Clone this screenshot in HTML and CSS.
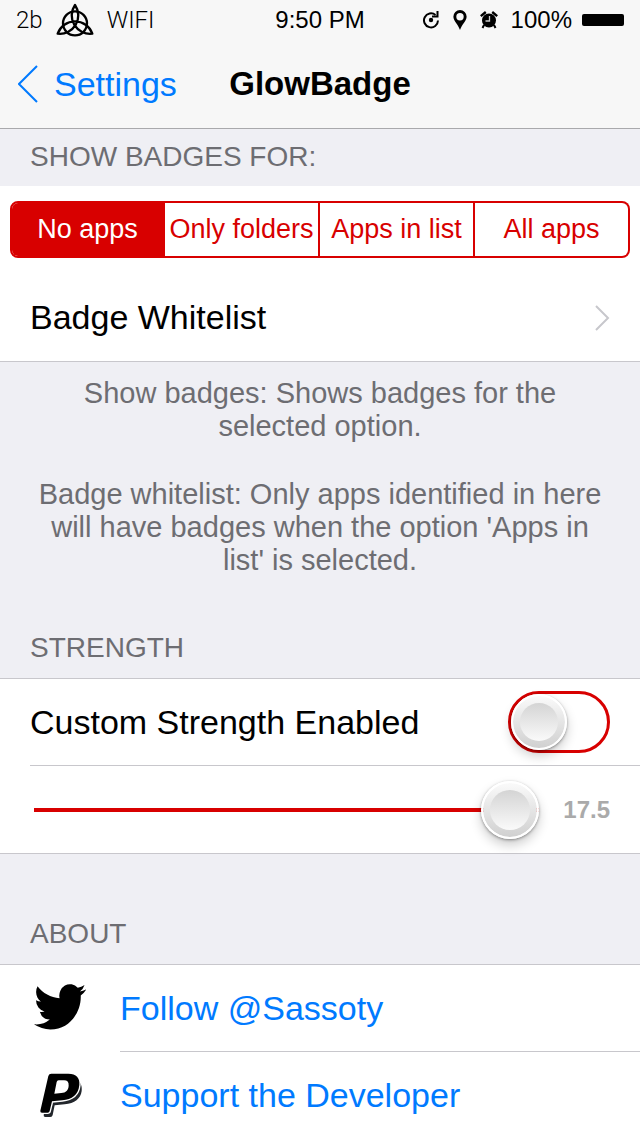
FILE: index.html
```html
<!DOCTYPE html>
<html lang="en">
<head>
<meta charset="utf-8">
<meta name="viewport" content="width=device-width, initial-scale=1">
<title>GlowBadge</title>
<link rel="stylesheet" href="styles.css">
</head>
<body>
<div class="app">
  <header class="top">
    <div class="status">
      <div class="status-left">
        <span>2b</span>
        <svg class="carrier" width="38" height="34" viewBox="167 5 114 102" fill="none" stroke="#000" stroke-width="7" stroke-linejoin="round" aria-hidden="true">
          <path d="M224 11A55 55 0 0 1 172 97A55 55 0 0 1 276 97A55 55 0 0 1 224 11Z"/>
          <circle cx="224" cy="66" r="36"/>
        </svg>
        <span>WIFI</span>
      </div>
      <time>9:50 PM</time>
      <div class="status-right">
        <svg width="18" height="18" viewBox="0 0 18 18" fill="none" stroke="#000" stroke-width="2" aria-hidden="true">
          <path d="M13.500 4A7 7 0 1 0 16 9.500"/>
          <path d="M10 5.500H15.500V0"/>
          <circle cx="9" cy="9" r="2.200" fill="#000" stroke="none"/>
        </svg>
        <svg class="pin" width="14" height="20" viewBox="0 0 14 20" aria-hidden="true">
          <path fill-rule="evenodd" d="M7 0a6.600 6.600 0 0 0-6.600 6.700C.4 11 5 14 7 20c2-6 6.600-9 6.600-13.300A6.600 6.600 0 0 0 7 0Zm0 3a3.700 3.700 0 1 1 0 7.400A3.700 3.700 0 0 1 7 3Z"/>
        </svg>
        <svg width="18" height="18" viewBox="0 0 18 18" aria-hidden="true">
          <circle cx="9" cy="9.500" r="7"/>
          <path d="M.8 5.200 5.800 1M17.200 5.200 12.200 1" stroke="#000" stroke-width="2.400"/>
          <path d="m4 14-1.500 3M14 14l1.500 3" stroke="#000" stroke-width="2"/>
          <path d="M9.500 5v5H5.500" fill="none" stroke="#ccc" stroke-width="1.300"/>
        </svg>
        <div class="power">
          <span>100%</span>
          <span class="battery"></span>
        </div>
      </div>
    </div>
    <nav class="nav">
      <a class="back" href="#">
        <svg width="20" height="38" viewBox="0 0 20 38" fill="none" stroke="currentColor" stroke-width="2" aria-hidden="true"><path d="M19 1 1 19 19 37"/></svg>
        Settings
      </a>
      <h1>GlowBadge</h1>
    </nav>
  </header>

  <main>
    <section>
      <h2 class="heading heading-first">SHOW BADGES FOR:</h2>
      <div class="group group-first">
        <div class="segments" role="radiogroup" aria-label="Show badges for">
          <label><input type="radio" name="apps" checked><span>No apps</span></label>
          <label><input type="radio" name="apps"><span>Only folders</span></label>
          <label><input type="radio" name="apps"><span>Apps in list</span></label>
          <label><input type="radio" name="apps"><span>All apps</span></label>
        </div>
        <a class="row" href="#">
          Badge Whitelist
          <svg width="16" height="26" viewBox="0 0 16 26" fill="none" stroke="#c7c7cc" stroke-width="2" aria-hidden="true"><path d="m2 1 12 12L2 25"/></svg>
        </a>
      </div>
      <div class="note">
        <p>Show badges: Shows badges for the selected option.</p>
        <p>Badge whitelist: Only apps identified in here will have badges when the option 'Apps in list' is selected.</p>
      </div>
    </section>

    <section>
      <h2 class="heading">STRENGTH</h2>
      <div class="group">
        <div class="row row-switch">
          <label for="custom">Custom Strength Enabled</label>
          <input class="switch" id="custom" type="checkbox" role="switch">
        </div>
        <div class="row row-slider">
          <input class="slider" id="strength" type="range" min="0" max="17.5" step="0.5" value="17.5" aria-label="Strength">
          <output for="strength">17.5</output>
        </div>
      </div>
    </section>

    <section>
      <h2 class="heading heading-about">ABOUT</h2>
      <div class="group group-links">
        <a class="link" href="#">
          <svg width="60" height="60" viewBox="0 0 60 60" aria-hidden="true">
            <path transform="translate(4 1) scale(2.170 2.320)" d="M23.953 4.570a10 10 0 01-2.825.775 4.958 4.958 0 002.163-2.723c-.951.555-2.005.959-3.127 1.184a4.920 4.920 0 00-8.384 4.482C7.690 8.095 4.067 6.130 1.640 3.162a4.822 4.822 0 00-.666 2.475c0 1.710.870 3.213 2.188 4.096a4.904 4.904 0 01-2.228-.616v.060a4.923 4.923 0 003.946 4.827 4.996 4.996 0 01-2.212.085 4.936 4.936 0 004.604 3.417 9.867 9.867 0 01-6.102 2.105c-.390 0-.779-.023-1.170-.067a13.995 13.995 0 007.557 2.209c9.053 0 13.998-7.496 13.998-13.985 0-.210 0-.420-.015-.630A9.935 9.935 0 0024 4.590z"/>
          </svg>
          <span>Follow @Sassoty</span>
        </a>
        <a class="link" href="#">
          <svg width="60" height="60" viewBox="90 317 180 180" aria-hidden="true">
            <path fill="#22262b" d="M228 362C241 366 247 378 245 395C242 418 224 432 194 435L164 438L158 467Q157 473 151 473H136Q130 473 131 466L143 440L156 418L205 415Z"/>
            <path fill="none" stroke="#fff" stroke-width="8" d="M218 345C232 350 240 360 238 377C235 407 216 420 187 423L156 426L149 455Q148 460 143 460H126"/>
            <path fill-rule="evenodd" d="M154 343H205C229 343 240 356 238 377C235 407 216 420 187 423L156 426L149 455Q148 460 143 460H126Q120 460 121 454L145 350Q147 343 154 343ZM176 363Q171 363 170 368L163 403L184 401C198 400 205 393 206 379Q207 363 192 363Z"/>
          </svg>
          <span>Support the Developer</span>
        </a>
      </div>
    </section>
  </main>
</div>
</body>
</html>
```
FILE: styles.css
```css
*,
*::before { box-sizing: border-box; }

body {
  margin: 0;
  background: #efeff4;
  color: #000;
  font-family: "Liberation Sans", Arial, sans-serif;
  font-size: 34px;
}

a { color: #007aff; text-decoration: none; }
h1, h2, p { margin: 0; }
svg { display: block; flex: none; }

.app {
  display: flex;
  flex-direction: column;
  height: 100vh;
}

.top {
  flex: none;
  background: #f7f7f7;
  border-bottom: 1px solid #a9a9ac;
}

.status,
.nav {
  display: grid;
  grid-template-columns: 1fr auto 1fr;
  align-items: center;
}

.status {
  height: 40px;
  padding: 0 16px;
  font-size: 24px;
}

.status-left,
.status-right,
.power {
  display: flex;
  align-items: center;
}

.status-left {
  gap: 13px;
  font-family: Roboto, "Liberation Sans", sans-serif;
  font-weight: 300;
}

.status-right { justify-content: flex-end; gap: 13px; }
.power { gap: 10px; }

.battery {
  width: 42px;
  height: 12px;
  border-radius: 2px;
  background: #000;
}

.nav {
  height: 88px;
  padding: 0 18px;
}

.back {
  display: flex;
  align-items: center;
  gap: 16px;
}

h1 { font-size: 33px; }

main {
  flex: 1;
  min-height: 0;
  overflow-y: auto;
  scrollbar-width: none;
}

.heading {
  padding: 55px 30px 14px;
  color: #6d6d72;
  font-size: 28px;
  font-weight: 400;
  line-height: 32px;
}

.heading-first { padding: 12px 30px 13px; }
.heading-about { padding-top: 64px; }

.group {
  background: #fff;
  border: solid #c8c7cc;
  border-width: 1px 0;
}

.group-first {
  padding-top: 15px;
  border-top: 0;
}

.segments {
  display: grid;
  grid-template-columns: repeat(4, 1fr);
  height: 57px;
  margin: 0 10px 16px;
  color: #d80000;
  font-size: 27px;
  white-space: nowrap;
}

.segments label {
  display: grid;
  overflow: hidden;
  border: solid #d80000;
  border-width: 2px 2px 2px 0;
}

.segments label:first-child {
  border-left-width: 2px;
  border-radius: 8px 0 0 8px;
}

.segments label:last-child { border-radius: 0 8px 8px 0; }

.segments input {
  grid-area: 1 / 1;
  appearance: none;
  margin: 0;
}

.segments span {
  grid-area: 1 / 1;
  display: flex;
  align-items: center;
  justify-content: center;
}

.segments input:checked + span {
  background: #d80000;
  color: #fff;
}

.row {
  display: flex;
  align-items: center;
  justify-content: space-between;
  height: 87px;
  padding: 0 30px;
  color: #000;
}

.note {
  display: flex;
  flex-direction: column;
  gap: 35px;
  padding: 15px 30px 0;
  color: #6d6d72;
  font-size: 29px;
  line-height: 33px;
  text-align: center;
}

.row-switch { height: 86px; }

.switch,
.slider {
  appearance: none;
  margin: 0;
}

.switch {
  width: 102px;
  height: 62px;
  border: 3px solid #d80000;
  border-radius: 31px;
}

.switch::before {
  content: "";
  display: block;
  width: 56px;
  height: 56px;
}

.switch:checked::before { margin-left: 40px; }

.switch::before,
.slider::-webkit-slider-thumb {
  padding: 7px;
  border: 2px solid #fff;
  border-radius: 50%;
  background:
    linear-gradient(#d4d4d4, #fafafa) content-box,
    linear-gradient(#fafafa, #d0d0d0) padding-box;
  box-shadow: 0 6px 12px rgba(0, 0, 0, 0.2), 0 1px 3px rgba(0, 0, 0, 0.4);
}

.row-slider {
  height: 88px;
  margin-left: 30px;
  padding: 0 30px 0 4px;
  border-top: 1px solid #c8c7cc;
}

.slider {
  flex: 1;
  height: 58px;
  margin-right: 24px;
  background: linear-gradient(#d80000, #d80000) center / 100% 4px no-repeat;
}

.slider::-webkit-slider-thumb {
  appearance: none;
  box-sizing: border-box;
  width: 58px;
  height: 58px;
}

output {
  color: #aaa;
  font-size: 24px;
  font-weight: 700;
}

.group-links { border-bottom: 0; }

.link {
  display: flex;
  align-items: center;
  gap: 30px;
  padding-left: 30px;
}

.link span {
  flex: 1;
  line-height: 86px;
}

.link + .link span { border-top: 1px solid #c8c7cc; }
```
